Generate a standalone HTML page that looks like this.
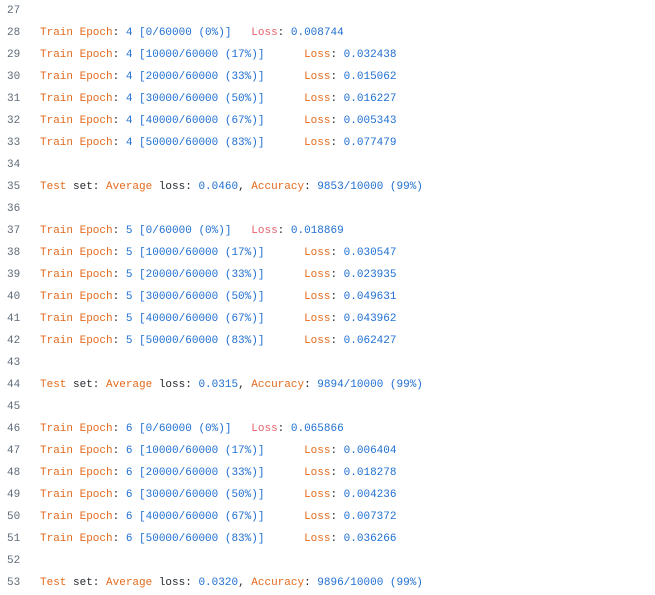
<!DOCTYPE html>
<html><head><meta charset="utf-8"><style>
html,body{margin:0;padding:0;background:#fff;width:655px;height:595px;overflow:hidden}
.w{position:absolute;left:0;top:1px}
.l{position:absolute;height:22px;line-height:22px;font-family:"Liberation Mono",monospace;font-size:11px;white-space:pre;tab-size:8;-moz-tab-size:8}
.n{left:7px;color:#5f6b78}
.c{left:40px;color:#24292f}
.o{color:#e36a1c}.b{color:#1f6fd1}.p{color:#e35f6a}
</style></head><body><div class="w">
<div class="l n" style="top:-1px">27</div>
<div class="l n" style="top:21px">28</div><div class="l c" style="top:21px"><span class="o">Train Epoch</span>: <span class="b">4 [0/60000 (0%)]</span>   <span class="p">Loss</span>: <span class="b">0.008744</span></div>
<div class="l n" style="top:43px">29</div><div class="l c" style="top:43px"><span class="o">Train Epoch</span>: <span class="b">4 [10000/60000 (17%)]</span>      <span class="o">Loss</span>: <span class="b">0.032438</span></div>
<div class="l n" style="top:65px">30</div><div class="l c" style="top:65px"><span class="o">Train Epoch</span>: <span class="b">4 [20000/60000 (33%)]</span>      <span class="o">Loss</span>: <span class="b">0.015062</span></div>
<div class="l n" style="top:87px">31</div><div class="l c" style="top:87px"><span class="o">Train Epoch</span>: <span class="b">4 [30000/60000 (50%)]</span>      <span class="o">Loss</span>: <span class="b">0.016227</span></div>
<div class="l n" style="top:109px">32</div><div class="l c" style="top:109px"><span class="o">Train Epoch</span>: <span class="b">4 [40000/60000 (67%)]</span>      <span class="o">Loss</span>: <span class="b">0.005343</span></div>
<div class="l n" style="top:131px">33</div><div class="l c" style="top:131px"><span class="o">Train Epoch</span>: <span class="b">4 [50000/60000 (83%)]</span>      <span class="o">Loss</span>: <span class="b">0.077479</span></div>
<div class="l n" style="top:153px">34</div>
<div class="l n" style="top:175px">35</div><div class="l c" style="top:175px"><span class="o">Test</span> set: <span class="o">Average</span> loss: <span class="b">0.0460</span>, <span class="o">Accuracy</span>: <span class="b">9853/10000 (99%)</span></div>
<div class="l n" style="top:197px">36</div>
<div class="l n" style="top:219px">37</div><div class="l c" style="top:219px"><span class="o">Train Epoch</span>: <span class="b">5 [0/60000 (0%)]</span>   <span class="p">Loss</span>: <span class="b">0.018869</span></div>
<div class="l n" style="top:241px">38</div><div class="l c" style="top:241px"><span class="o">Train Epoch</span>: <span class="b">5 [10000/60000 (17%)]</span>      <span class="o">Loss</span>: <span class="b">0.030547</span></div>
<div class="l n" style="top:263px">39</div><div class="l c" style="top:263px"><span class="o">Train Epoch</span>: <span class="b">5 [20000/60000 (33%)]</span>      <span class="o">Loss</span>: <span class="b">0.023935</span></div>
<div class="l n" style="top:285px">40</div><div class="l c" style="top:285px"><span class="o">Train Epoch</span>: <span class="b">5 [30000/60000 (50%)]</span>      <span class="o">Loss</span>: <span class="b">0.049631</span></div>
<div class="l n" style="top:307px">41</div><div class="l c" style="top:307px"><span class="o">Train Epoch</span>: <span class="b">5 [40000/60000 (67%)]</span>      <span class="o">Loss</span>: <span class="b">0.043962</span></div>
<div class="l n" style="top:329px">42</div><div class="l c" style="top:329px"><span class="o">Train Epoch</span>: <span class="b">5 [50000/60000 (83%)]</span>      <span class="o">Loss</span>: <span class="b">0.062427</span></div>
<div class="l n" style="top:351px">43</div>
<div class="l n" style="top:373px">44</div><div class="l c" style="top:373px"><span class="o">Test</span> set: <span class="o">Average</span> loss: <span class="b">0.0315</span>, <span class="o">Accuracy</span>: <span class="b">9894/10000 (99%)</span></div>
<div class="l n" style="top:395px">45</div>
<div class="l n" style="top:417px">46</div><div class="l c" style="top:417px"><span class="o">Train Epoch</span>: <span class="b">6 [0/60000 (0%)]</span>   <span class="p">Loss</span>: <span class="b">0.065866</span></div>
<div class="l n" style="top:439px">47</div><div class="l c" style="top:439px"><span class="o">Train Epoch</span>: <span class="b">6 [10000/60000 (17%)]</span>      <span class="o">Loss</span>: <span class="b">0.006404</span></div>
<div class="l n" style="top:461px">48</div><div class="l c" style="top:461px"><span class="o">Train Epoch</span>: <span class="b">6 [20000/60000 (33%)]</span>      <span class="o">Loss</span>: <span class="b">0.018278</span></div>
<div class="l n" style="top:483px">49</div><div class="l c" style="top:483px"><span class="o">Train Epoch</span>: <span class="b">6 [30000/60000 (50%)]</span>      <span class="o">Loss</span>: <span class="b">0.004236</span></div>
<div class="l n" style="top:505px">50</div><div class="l c" style="top:505px"><span class="o">Train Epoch</span>: <span class="b">6 [40000/60000 (67%)]</span>      <span class="o">Loss</span>: <span class="b">0.007372</span></div>
<div class="l n" style="top:527px">51</div><div class="l c" style="top:527px"><span class="o">Train Epoch</span>: <span class="b">6 [50000/60000 (83%)]</span>      <span class="o">Loss</span>: <span class="b">0.036266</span></div>
<div class="l n" style="top:549px">52</div>
<div class="l n" style="top:571px">53</div><div class="l c" style="top:571px"><span class="o">Test</span> set: <span class="o">Average</span> loss: <span class="b">0.0320</span>, <span class="o">Accuracy</span>: <span class="b">9896/10000 (99%)</span></div>
</div></body></html>
